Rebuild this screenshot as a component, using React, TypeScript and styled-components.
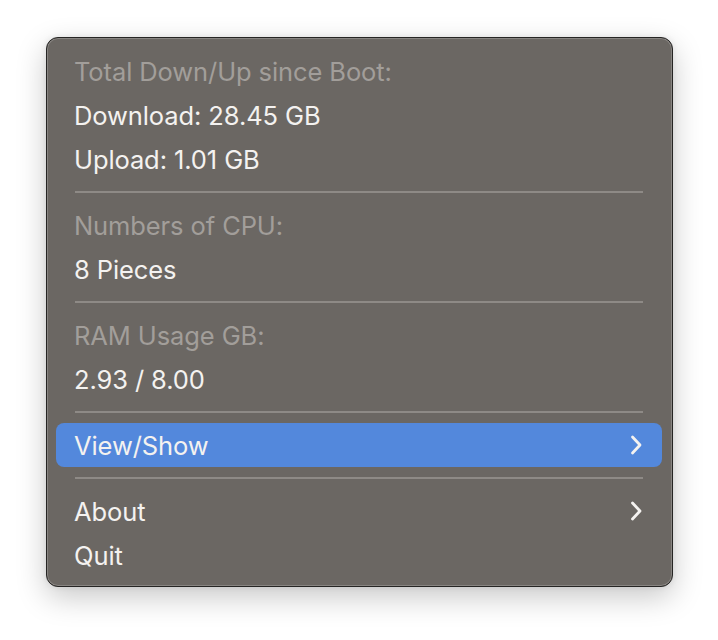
import { styled, createGlobalStyle } from 'styled-components';

const GlobalStyle = createGlobalStyle`
  html, body {
    margin:0;
    padding:0;
    background:#FFFFFF;
  }
  body {
    font-family: Inter, "Noto Sans", "Liberation Sans", sans-serif;
    -webkit-font-smoothing: antialiased;
  }
`;

type Row = { label: string; muted?: boolean; active?: boolean; submenu?: boolean };

const groups: Row[][] = [
  [
    { label: "Total Down/Up since Boot:", muted: true },
    { label: "Download: 28.45 GB" },
    { label: "Upload: 1.01 GB" },
  ],
  [
    { label: "Numbers of CPU:", muted: true },
    { label: "8 Pieces" },
  ],
  [
    { label: "RAM Usage GB:", muted: true },
    { label: "2.93 / 8.00" },
  ],
  [{ label: "View/Show", active: true, submenu: true }],
  [
    { label: "About", submenu: true },
    { label: "Quit" },
  ],
];

const Chevron = () => (
  <svg width="13" height="20" viewBox="0 0 13 20" fill="none">
    <path d="M2.5 2 L10 10 L2.5 18" stroke="#F4F2F0" strokeWidth="2.8" strokeLinecap="round" strokeLinejoin="round" />
  </svg>
);

function App() {
  return (
    <>
      <GlobalStyle />
      <Page>
        <Menu>
          {groups.map((group, gi) => (
            <div key={gi}>
              {gi > 0 && <Separator />}
              {group.map((row) => (
                <Item key={row.label} $active={row.active}>
                  <Label $muted={row.muted}>{row.label}</Label>
                  {row.submenu && <Chevron />}
                </Item>
              ))}
            </div>
          ))}
        </Menu>
      </Page>
    </>
  );
}

export default App;

const Page = styled.div`
  width:718px;
  height:640px;
  padding:37px 0 0 46px;
  box-sizing:border-box;
`;

const Menu = styled.div`
  width:627px;
  box-sizing:border-box;
  padding:11px 10px 9px 9px;
  background-color:#6B6763;
  border:1px solid #262524;
  border-radius:12px;
  box-shadow: inset 0 0 0 1px rgba(255,255,255,0.2), 0 10px 30px rgba(0,0,0,0.22), 0 0 6px rgba(0,0,0,0.08);
`;

const Item = styled.div<{ $active?: boolean }>`
  height:44px;
  display:flex;
  align-items:center;
  justify-content:space-between;
  padding:0 19px 0 18px;
  border-radius:8px;
  background-color:${(p) => (p.$active ? "#5388DC" : "transparent")};
`;

const Label = styled.span<{ $muted?: boolean }>`
  font-size:25.5px;
  font-weight:400;
  letter-spacing:-0.1px;
  color:${(p) => (p.$muted ? "#A29E9A" : "#F4F2F0")};
`;

const Separator = styled.div`
  height:2px;
  margin:10px 19px 10px 19px;
  background-color:#8E8A86;
`;
